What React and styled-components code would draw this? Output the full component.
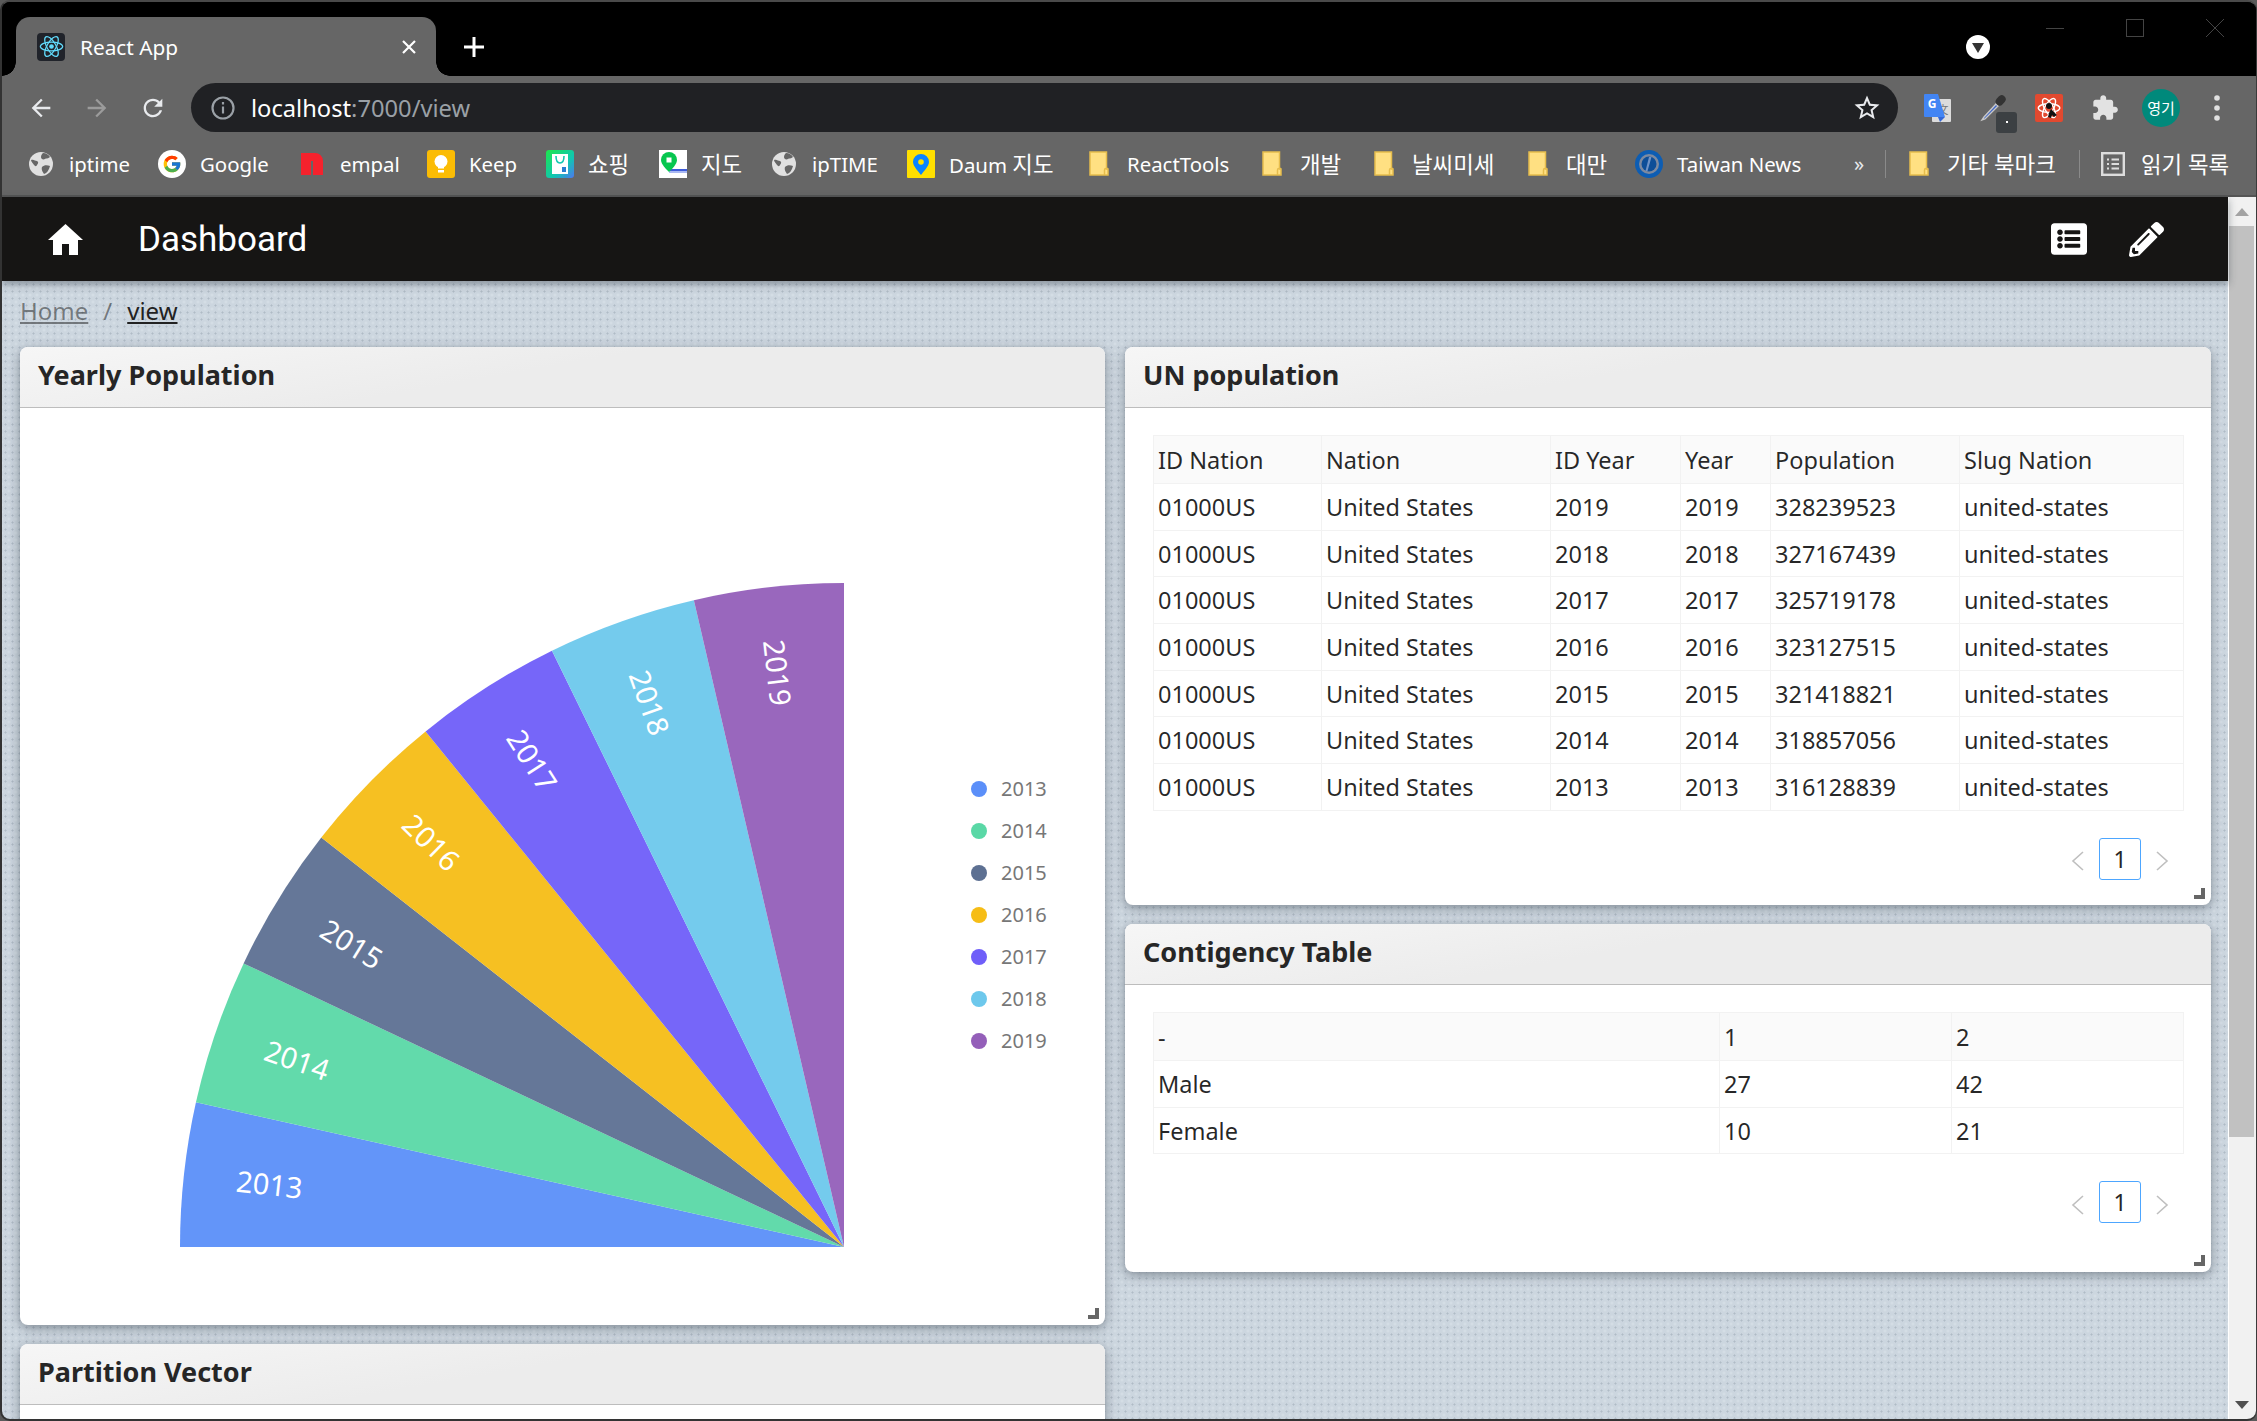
import React from 'react';
import styled, { createGlobalStyle } from 'styled-components';
import { FaListAlt, FaPencilAlt } from 'react-icons/fa';
import { FcGoogle } from 'react-icons/fc';

const FONT = '"Noto Sans", "Noto Sans CJK KR", sans-serif';

const GlobalStyle = createGlobalStyle`
  html, body {
    margin: 0;
    padding: 0;
    width: 100%;
    height: 100%;
    overflow: hidden;
    background: #5a5a5a;
    font-family: ${FONT};
  }
  * { box-sizing: border-box; }
`;

const Window = styled.div`
  display: flex;
  flex-direction: column;
  width: 2257px;
  height: 1421px;
  border-style: solid;
  border-color: #4a4a4a #3a3a3a #333 #333;
  border-width: 2px 1px 2px 2px;
  border-radius: 10px;
  overflow: hidden;
  background: #000;
`;

const TabStrip = styled.div`
  display: flex;
  align-items: center;
  flex: none;
  height: 74px;
  padding: 15px 32px 0 14px;
  background: #000;
`;

const Tab = styled.div`
  position: relative;
  display: flex;
  align-items: center;
  width: 420px;
  height: 59px;
  padding: 0 20px 0 21px;
  background: #666;
  border-radius: 14px 14px 0 0;
  color: #fff;
  font-size: 20.8px;

  &::before,
  &::after {
    content: '';
    position: absolute;
    bottom: 0;
    width: 14px;
    height: 14px;
  }
  &::before {
    left: -14px;
    background: radial-gradient(circle at 0 0, transparent 13.5px, #666 14px);
  }
  &::after {
    right: -14px;
    background: radial-gradient(circle at 100% 0, transparent 13.5px, #666 14px);
  }
`;

const Favicon = styled.span`
  display: flex;
  align-items: center;
  justify-content: center;
  width: 28px;
  height: 28px;
  margin-right: 15px;
  background: #20232a;
  border-radius: 4px;
`;

const TabClose = styled.svg`
  margin-left: auto;
`;

const NewTab = styled.svg`
  margin-left: 27px;
`;

const ProfileMenu = styled.span`
  position: relative;
  width: 24px;
  height: 24px;
  margin-left: auto;
  border-radius: 50%;
  background: #fff;

  &::after {
    content: '';
    position: absolute;
    left: 6px;
    top: 8px;
    border-left: 6px solid transparent;
    border-right: 6px solid transparent;
    border-top: 10px solid #333;
  }
`;

const WindowControls = styled.div`
  display: flex;
  align-self: flex-start;
  gap: 62px;
  margin: 2px 0 0 56px;
`;

const Toolbar = styled.div`
  display: flex;
  align-items: center;
  flex: none;
  height: 56px;
  padding: 7px 0 0 25px;
  background: #666;
`;

const NavButton = styled.span`
  display: flex;
  align-items: center;
  justify-content: center;
  width: 28px;
  height: 28px;
  margin-right: 28px;

  &:last-of-type {
    margin-right: 24px;
  }
`;

const AddressBar = styled.div`
  display: flex;
  align-items: center;
  width: 1707px;
  height: 49px;
  padding: 0 16px 0 20px;
  border-radius: 25px;
  background: #202124;
  font-size: 23.7px;
  color: #fff;
`;

const Host = styled.span`
  margin-left: 16px;
`;

const Path = styled.span`
  color: #9aa0a6;
`;

const Star = styled.svg`
  margin-left: auto;
`;

const Extensions = styled.div`
  display: flex;
  align-items: center;
  gap: 28px;
  margin-left: 25px;
`;

const Extension = styled.span`
  position: relative;
  display: flex;
  align-items: center;
  justify-content: center;
  width: 28px;
  height: 28px;
`;

const Avatar = styled.span`
  display: flex;
  align-items: center;
  justify-content: center;
  flex: none;
  width: 38px;
  height: 38px;
  border-radius: 50%;
  background: #00897b;
  color: #fff;
  font-size: 15px;
`;

const ExtBadge = styled.span`
  position: absolute;
  right: -10px;
  bottom: -11px;
  display: flex;
  align-items: center;
  justify-content: center;
  width: 21px;
  height: 21px;
  border-radius: 3px;
  background: #3c4043;

  &::after {
    content: '';
    width: 2px;
    height: 2px;
    background: #fff;
  }
`;

const BookmarkBar = styled.div`
  display: flex;
  align-items: center;
  flex: none;
  gap: 30px;
  height: 65px;
  padding-left: 25px;
  background: #666;
  border-bottom: 2px solid #555;
  color: #fff;
  font-size: 20.4px;
`;

const Bookmark = styled.span`
  display: flex;
  align-items: center;
  flex: none;
`;

const BookmarkIcon = styled.span`
  display: flex;
  align-items: center;
  justify-content: center;
  flex: none;
  width: 28px;
  height: 28px;
  margin-right: 14px;
`;

const BookmarkLabel = styled.span`
  width: ${p => p.$width}px;
  white-space: nowrap;
`;

const Hangul = styled.span`
  font-size: 22.4px;
`;

const Tail = styled.div`
  display: flex;
  align-items: center;
  gap: 19px;
  margin-left: 22px;
`;

const Overflow = styled.span`
  width: 12px;
  font-size: 20px;
  line-height: 1;
  color: #e8eaed;
`;

const BarSeparator = styled.span`
  width: 1px;
  height: 28px;
  background: #8a8a8a;
`;

const Body = styled.div`
  display: flex;
  flex: 1;
  min-height: 0;
`;

const Page = styled.div`
  display: flex;
  flex-direction: column;
  flex: 1;
  min-width: 0;
  background-color: #ccd6df;
  background-image:
    radial-gradient(rgba(130, 144, 158, 0.38) 0.8px, transparent 1.3px),
    radial-gradient(rgba(226, 233, 240, 0.45) 1px, transparent 1.6px);
  background-size: 7px 7px;
  background-position: 0 0, 3.5px 3.5px;
`;

const Navbar = styled.header`
  position: relative;
  z-index: 2;
  display: flex;
  align-items: center;
  flex: none;
  height: 84px;
  padding: 0 64px 0 46px;
  background: #161514;
  color: #fff;
  box-shadow: 0 3px 8px rgba(40, 50, 60, 0.45);
`;

const Brand = styled.span`
  margin-left: 55px;
  font-family: Roboto, sans-serif;
  font-size: 35px;
`;

const NavActions = styled.div`
  display: flex;
  align-items: center;
  gap: 42px;
  margin-left: auto;
`;

const Main = styled.main`
  flex: 1;
  min-height: 0;
  overflow: hidden;
  padding: 0 17px 0 18px;
`;

const Crumbs = styled.nav`
  display: flex;
  align-items: center;
  gap: 15px;
  height: 58px;
  margin-bottom: 8px;
  font-size: 24px;
  color: rgba(0, 0, 0, 0.45);
`;

const Crumb = styled.a`
  color: ${p => (p.$current ? '#222' : 'rgba(0, 0, 0, 0.45)')};
  text-decoration: underline;
`;

const Grid = styled.div`
  display: grid;
  grid-template-columns: 1085px 1086px;
  column-gap: 20px;
`;

const Column = styled.div`
  display: flex;
  flex-direction: column;
  gap: 19px;
`;

const Card = styled.section`
  position: relative;
  flex: none;
  height: ${p => p.$height}px;
  background: #fff;
  border-radius: 8px;
  box-shadow: 0 3px 12px rgba(50, 60, 72, 0.5);
`;

const CardHeader = styled.h2`
  display: flex;
  align-items: center;
  height: 61px;
  margin: 0;
  padding: 0 18px 5px 18px;
  background: linear-gradient(170deg, #f6f6f6, #ececec 45%);
  border-bottom: 1.5px solid #bdbdbd;
  border-radius: 8px 8px 0 0;
  font-size: 27px;
  font-weight: 700;
  color: #262626;
`;

const CardBody = styled.div`
  padding: 27px 28px 0;
`;

const ResizeHandle = styled.span`
  position: absolute;
  right: 6px;
  bottom: 6px;
  width: 11px;
  height: 11px;
  border-right: 4px solid #666;
  border-bottom: 4px solid #666;
`;

const ChartSvg = styled.svg`
  display: block;
`;

const DataTable = styled.table`
  width: 1030px;
  table-layout: fixed;
  border-collapse: collapse;
  font-size: 23.5px;
  color: rgba(0, 0, 0, 0.85);
`;

const Th = styled.th`
  height: 48px;
  padding: 0 4px;
  background: #fafafa;
  border: 1.5px solid #f2f2f2;
  font-weight: 400;
  text-align: left;
`;

const Td = styled.td`
  height: 46.7px;
  padding: 0 4px;
  border: 1.5px solid #f2f2f2;
  white-space: nowrap;
`;

const Pagination = styled.div`
  display: flex;
  justify-content: flex-end;
  margin-top: 27px;
`;

const PageArrow = styled.span`
  display: flex;
  align-items: center;
  justify-content: center;
  width: 42px;
  height: 42px;
  padding-top: 5px;
`;

const PageItem = styled.span`
  display: flex;
  align-items: center;
  justify-content: center;
  width: 42px;
  height: 42px;
  border: 1.5px solid #4da6ff;
  border-radius: 3px;
  font-size: 23px;
  color: #262626;
`;

const Scrollbar = styled.div`
  display: flex;
  flex-direction: column;
  align-items: flex-start;
  flex: none;
  width: 28px;
  background: #f1f1f1;
  border-left: 1px solid #fff;
`;

const ScrollButton = styled.span`
  display: flex;
  align-items: center;
  justify-content: center;
  flex: none;
  width: 25px;
  height: 29px;
  margin-top: ${p => (p.$bottom ? 'auto' : '0')};
`;

const ScrollTriangle = styled.span`
  border-left: 7px solid transparent;
  border-right: 7px solid transparent;
  ${p => (p.$down ? `border-top: 8px solid #505050;` : `border-bottom: 8px solid #a3a3a3;`)}
`;

const ScrollThumb = styled.span`
  flex: none;
  width: 25px;
  height: 911px;
  background: #c1c1c1;
`;

const Atom = ({ size = 24, color = '#61dafb' }) => (
  <svg width={size} height={size} viewBox="0 0 28 28" fill="none" stroke={color} strokeWidth="1.4">
    <circle cx="14" cy="14" r="2.6" fill={color} stroke="none" />
    <ellipse cx="14" cy="14" rx="12.5" ry="5" />
    <ellipse cx="14" cy="14" rx="12.5" ry="5" transform="rotate(60 14 14)" />
    <ellipse cx="14" cy="14" rx="12.5" ry="5" transform="rotate(120 14 14)" />
  </svg>
);

const HomeIcon = () => (
  <svg width="35" height="31" viewBox="0 0 35 31" fill="#fff">
    <path d="M17.5 0L35 16h-5v15h-9V20h-7v11H5V16H0z" />
  </svg>
);

const GlobeIcon = () => (
  <svg width="24" height="24" viewBox="0 0 24 24">
    <circle cx="12" cy="12" r="12" fill="#e0e0e0" />
    <path d="M2 8c3-1 4 1 6 1 2 1 1 3 0 4-1 2-2 1-3 0-1-2-3-3-3-5zM14 1c3 0 6 2 7 4-2 2-4 1-5 2-2 1-4 0-4-2 0-2 1-3 2-4zM13 15c2-2 5-2 8-1-1 4-3 7-6 8-1-2-3-4-2-7z" fill="#666" />
  </svg>
);

const GoogleBadge = () => (
  <svg width="28" height="28" viewBox="0 0 28 28">
    <circle cx="14" cy="14" r="14" fill="#fff" />
    <FcGoogle x="4" y="4" size={20} />
  </svg>
);

const EmpalIcon = () => (
  <svg width="22" height="22" viewBox="0 0 22 22">
    <path d="M0 22V0h14a8 8 0 0 1 8 8v14h-10V8H10v14z" fill="#f5222d" />
  </svg>
);

const KeepIcon = () => (
  <svg width="28" height="28" viewBox="0 0 28 28">
    <rect width="28" height="28" rx="3" fill="#fbbc04" />
    <circle cx="14" cy="11.5" r="6.5" fill="#fff" />
    <rect x="11" y="15" width="6" height="3.5" fill="#fff" />
    <rect x="11" y="20" width="6" height="2.5" fill="#fff" />
  </svg>
);

const ShoppingIcon = () => (
  <svg width="28" height="28" viewBox="0 0 28 28">
    <defs>
      <linearGradient id="shop" x1="0" y1="0" x2="1" y2="1">
        <stop offset="0" stopColor="#1de74a" />
        <stop offset="0.6" stopColor="#10c7b0" />
        <stop offset="1" stopColor="#4e78f0" />
      </linearGradient>
    </defs>
    <rect width="28" height="28" rx="3" fill="url(#shop)" />
    <rect x="6" y="4" width="16" height="20" fill="#fff" />
    <path d="M10 6c0 5 2 7 4 7s4-2 4-7" fill="none" stroke="#10c7b0" strokeWidth="1.6" />
    <rect x="16" y="17" width="4" height="5" fill="#2a7fd0" />
  </svg>
);

const MapIcon = () => (
  <svg width="28" height="28" viewBox="0 0 28 28">
    <rect width="28" height="28" fill="#fff" />
    <rect x="10" y="19" width="18" height="2" fill="#3d5bd9" />
    <rect x="10" y="21" width="18" height="2" fill="#a9b8f2" />
    <path d="M10 2a8 8 0 0 1 8 8c0 4-5 9-8 12-3-3-8-8-8-12a8 8 0 0 1 8-8z" fill="#07c64f" />
    <rect x="7.5" y="7.5" width="5" height="5" fill="#fff" />
  </svg>
);

const DaumIcon = () => (
  <svg width="28" height="28" viewBox="0 0 28 28">
    <rect width="28" height="28" rx="1" fill="#ffe000" />
    <path d="M14 4a8 8 0 0 1 8 8c0 4-5 9-8 13-3-4-8-9-8-13a8 8 0 0 1 8-8z" fill="#0a84ff" />
    <circle cx="14" cy="12" r="2.8" fill="#ffe000" />
  </svg>
);

const FolderIcon = () => (
  <svg width="20" height="25" viewBox="0 0 20 25">
    <path d="M1 1h16.5v17H19v6H1z" fill="#ffe082" stroke="#e6bd4c" strokeWidth="1.5" />
    <path d="M15.5 24v-5a1.5 1.5 0 0 1 1.5-1.5h2" fill="none" stroke="#e6bd4c" strokeWidth="1.5" />
  </svg>
);

const NewsIcon = () => (
  <svg width="28" height="28" viewBox="0 0 28 28">
    <circle cx="14" cy="14" r="14" fill="#0d5db3" />
    <circle cx="14" cy="14" r="10" fill="#7d8aa0" />
    <circle cx="14" cy="14" r="7.5" fill="#0d4e98" />
    <path d="M16.5 7l-4 14h-2l3.5-14z" fill="#6f93c7" />
  </svg>
);

const ReadingIcon = () => (
  <svg width="24" height="24" viewBox="0 0 24 24" fill="none" stroke="#ddd">
    <rect x="1.2" y="1.2" width="21.6" height="21.6" strokeWidth="2.4" />
    <path d="M6 7.5h2M6 12h2M6 16.5h2M10.5 7.5H18M10.5 12H18M10.5 16.5H18" strokeWidth="2.2" />
  </svg>
);

const TranslateIcon = () => (
  <svg width="28" height="28" viewBox="0 0 28 28">
    <rect x="9" y="5" width="19" height="23" rx="1" fill="#dcdcdc" />
    <text x="20" y="20" fontSize="11" fill="#777" textAnchor="middle" fontFamily={FONT}>文</text>
    <path d="M1 1a1 1 0 0 1 1-1h13l7 23H2a1 1 0 0 1-1-1z" fill="#4285f4" />
    <path d="M15 23h7l-5 5z" fill="#3367d6" />
    <text x="9" y="14" fontSize="12" fontWeight="700" fill="#fff" textAnchor="middle" fontFamily={FONT}>G</text>
  </svg>
);

const DropperIcon = () => (
  <svg width="28" height="28" viewBox="0 0 28 28">
    <path d="M17 10L5 23l-2 3 3-1L19 12z" fill="#3f66c8" stroke="#c8c8c8" strokeWidth="1.4" />
    <rect x="18" y="1" width="8" height="11" rx="4" transform="rotate(42 22 6)" fill="#333" />
  </svg>
);

const ReactBugIcon = () => (
  <svg width="28" height="28" viewBox="0 0 28 28">
    <rect width="28" height="28" rx="2" fill="#e2492f" />
    <g transform="translate(2 2) scale(0.86)" fill="none" stroke="#fff" strokeWidth="1.6">
      <ellipse cx="14" cy="14" rx="12.5" ry="5" />
      <ellipse cx="14" cy="14" rx="12.5" ry="5" transform="rotate(60 14 14)" />
      <ellipse cx="14" cy="14" rx="12.5" ry="5" transform="rotate(120 14 14)" />
    </g>
    <circle cx="14" cy="12" r="3" fill="#111" />
    <path d="M16 15l6 6-3 2-2-2-1 3-3-1 1-4z" fill="#111" />
  </svg>
);

const PuzzleIcon = () => (
  <svg width="28" height="28" viewBox="0 0 24 24" fill="#e2e2e2">
    <path d="M20.5 11H19V7c0-1.1-.9-2-2-2h-4V3.5C13 2.12 11.88 1 10.5 1S8 2.12 8 3.5V5H4c-1.1 0-1.99.9-1.99 2v3.8H3.5c1.49 0 2.7 1.21 2.7 2.7s-1.21 2.7-2.7 2.7H2V20c0 1.1.9 2 2 2h3.8v-1.5c0-1.49 1.21-2.7 2.7-2.7 1.49 0 2.7 1.21 2.7 2.7V22H17c1.1 0 2-.9 2-2v-4h1.5c1.38 0 2.5-1.12 2.5-2.5S21.88 11 20.5 11z" />
  </svg>
);

const KebabIcon = () => (
  <svg width="6" height="26" viewBox="0 0 6 26" fill="#e0e0e0">
    <circle cx="3" cy="3" r="2.8" />
    <circle cx="3" cy="13" r="2.8" />
    <circle cx="3" cy="23" r="2.8" />
  </svg>
);

const Chevron = ({ right }) => (
  <svg width="14" height="20" viewBox="0 0 14 20" fill="none" stroke="#bfbfbf" strokeWidth="1.6">
    <path d={right ? 'M2 1l10 9-10 9' : 'M12 1L2 10l10 9'} />
  </svg>
);

const BOOKMARKS = [
  { id: 'iptime', label: 'iptime', width: 59, icon: <GlobeIcon /> },
  { id: 'google', label: 'Google', width: 68, icon: <GoogleBadge /> },
  { id: 'empal', label: 'empal', width: 57, icon: <EmpalIcon /> },
  { id: 'keep', label: 'Keep', width: 47, icon: <KeepIcon /> },
  { id: 'shop', label: <Hangul>쇼핑</Hangul>, width: 41, icon: <ShoppingIcon /> },
  { id: 'map', label: <Hangul>지도</Hangul>, width: 39, icon: <MapIcon /> },
  { id: 'ipTIME', label: 'ipTIME', width: 65, icon: <GlobeIcon /> },
  { id: 'daum', label: <>Daum <Hangul>지도</Hangul></>, width: 106, icon: <DaumIcon /> },
  { id: 'tools', label: 'ReactTools', width: 101, icon: <FolderIcon /> },
  { id: 'dev', label: <Hangul>개발</Hangul>, width: 40, icon: <FolderIcon /> },
  { id: 'dust', label: <Hangul>날씨미세</Hangul>, width: 82, icon: <FolderIcon /> },
  { id: 'taiwan', label: <Hangul>대만</Hangul>, width: 39, icon: <FolderIcon /> },
  { id: 'news', label: 'Taiwan News', width: 125, icon: <NewsIcon /> }
];

const POPULATION_COLS = [168, 229, 130, 90, 189, 224];
const POPULATION_HEAD = ['ID Nation', 'Nation', 'ID Year', 'Year', 'Population', 'Slug Nation'];
const POPULATION_DATA = [
  [2019, 328239523],
  [2018, 327167439],
  [2017, 325719178],
  [2016, 323127515],
  [2015, 321418821],
  [2014, 318857056],
  [2013, 316128839]
];
const POPULATION = POPULATION_DATA.map(([year, total]) => ['01000US', 'United States', year, year, total, 'united-states']);

const CONTINGENCY_COLS = [566, 232, 232];
const CONTINGENCY_HEAD = ['-', '1', '2'];
const CONTINGENCY = [
  ['Male', 27, 42],
  ['Female', 10, 21]
];

const COLORS = ['#5B8FF9', '#5AD8A6', '#5D7092', '#F6BD16', '#6F5EF9', '#6DC8EC', '#945FB9'];

const CX = 824;
const CY = 839;
const RADIUS = 664;
const LABEL_RADIUS = 578;

// slices are proportional to the population of the year, oldest first
const SERIES = (() => {
  const rows = [...POPULATION_DATA].reverse();
  const sum = rows.reduce((acc, [, total]) => acc + total, 0);
  let start = 0;
  return rows.map(([year, total], i) => {
    const end = start + (total / sum) * 90;
    const slice = { year, color: COLORS[i], start, end };
    start = end;
    return slice;
  });
})();

const polar = (r, deg) => {
  const a = (deg * Math.PI) / 180;
  return [CX - r * Math.cos(a), CY - r * Math.sin(a)];
};

const Rose = () => (
  <ChartSvg width="1085" height="917" viewBox="0 0 1085 917">
    {SERIES.map(s => {
      const [x1, y1] = polar(RADIUS, s.start);
      const [x2, y2] = polar(RADIUS, s.end);
      const mid = (s.start + s.end) / 2;
      const [lx, ly] = polar(LABEL_RADIUS, mid);
      return (
        <g key={s.year}>
          <path
            d={`M${CX} ${CY}L${x1} ${y1}A${RADIUS} ${RADIUS} 0 0 1 ${x2} ${y2}Z`}
            fill={s.color}
            fillOpacity="0.95"
          />
          <text
            x={lx}
            y={ly}
            transform={`rotate(${mid} ${lx} ${ly})`}
            textAnchor="middle"
            dominantBaseline="central"
            fontSize="29"
            fill="#fff"
            fontFamily={FONT}
          >
            {s.year}
          </text>
        </g>
      );
    })}
    {SERIES.map((s, i) => (
      <g key={s.year}>
        <circle cx="959" cy={381 + i * 42} r="8" fill={s.color} />
        <text x="981" y={380 + i * 42} dominantBaseline="central" fontSize="20" fill="#777" fontFamily={FONT}>
          {s.year}
        </text>
      </g>
    ))}
  </ChartSvg>
);

const TablePanel = ({ cols, head, rows }) => (
  <CardBody>
    <DataTable>
      <colgroup>
        {cols.map((w, i) => <col key={i} width={w} />)}
      </colgroup>
      <thead>
        <tr>{head.map(h => <Th key={h}>{h}</Th>)}</tr>
      </thead>
      <tbody>
        {rows.map((row, r) => (
          <tr key={r}>{row.map((v, c) => <Td key={c}>{v}</Td>)}</tr>
        ))}
      </tbody>
    </DataTable>
    <Pagination>
      <PageArrow><Chevron /></PageArrow>
      <PageItem>1</PageItem>
      <PageArrow><Chevron right /></PageArrow>
    </Pagination>
  </CardBody>
);

const App = () => (
  <Window>
    <GlobalStyle />
    <TabStrip>
      <Tab>
        <Favicon><Atom size={25} /></Favicon>
        React App
        <TabClose width="14" height="14" viewBox="0 0 14 14" stroke="#fff" strokeWidth="2.2">
          <path d="M1 1l12 12M13 1L1 13" />
        </TabClose>
      </Tab>
      <NewTab width="22" height="22" viewBox="0 0 22 22" stroke="#fff" strokeWidth="3">
        <path d="M11 1v20M1 11h20" />
      </NewTab>
      <ProfileMenu />
      <WindowControls>
        <svg width="18" height="18" viewBox="0 0 18 18" stroke="#444"><path d="M0 9.5h18" /></svg>
        <svg width="18" height="18" viewBox="0 0 18 18" fill="none" stroke="#444"><rect x="0.5" y="0.5" width="17" height="17" /></svg>
        <svg width="18" height="18" viewBox="0 0 18 18" stroke="#444"><path d="M0 0l18 18M18 0L0 18" /></svg>
      </WindowControls>
    </TabStrip>

    <Toolbar>
      <NavButton>
        <svg width="34" height="34" viewBox="0 0 24 24" fill="#e8eaed">
          <path d="M20 11H7.83l5.59-5.59L12 4l-8 8 8 8 1.41-1.41L7.83 13H20v-2z" />
        </svg>
      </NavButton>
      <NavButton>
        <svg width="34" height="34" viewBox="0 0 24 24" fill="#9b9b9b">
          <path d="M4 11h12.17l-5.59-5.59L12 4l8 8-8 8-1.41-1.41L16.17 13H4v-2z" />
        </svg>
      </NavButton>
      <NavButton>
        <svg width="36" height="36" viewBox="0 0 24 24" fill="#e8eaed">
          <path d="M17.65 6.35C16.2 4.9 14.21 4 12 4c-4.42 0-7.99 3.58-7.99 8s3.57 8 7.99 8c3.73 0 6.84-2.55 7.73-6h-2.08c-.82 2.33-3.04 4-5.65 4-3.31 0-6-2.69-6-6s2.69-6 6-6c1.66 0 3.14.69 4.22 1.78L13 11h7V4l-2.35 2.35z" />
        </svg>
      </NavButton>
      <AddressBar>
        <svg width="24" height="24" viewBox="0 0 24 24" fill="none" stroke="#9aa0a6" strokeWidth="2.2">
          <circle cx="12" cy="12" r="10.5" />
          <path d="M12 10.5v7M12 6v2.6" />
        </svg>
        <Host>localhost<Path>:7000/view</Path></Host>
        <Star width="30" height="30" viewBox="0 0 24 24" fill="#e8eaed">
          <path d="M22 9.24l-7.19-.62L12 2 9.19 8.63 2 9.24l5.46 4.73L5.82 21 12 17.27 18.18 21l-1.63-7.03L22 9.24zM12 15.4l-3.76 2.27 1-4.28-3.32-2.88 4.38-.38L12 6.1l1.71 4.04 4.38.38-3.32 2.88 1 4.28L12 15.4z" />
        </Star>
      </AddressBar>
      <Extensions>
        <Extension><TranslateIcon /></Extension>
        <Extension><DropperIcon /><ExtBadge /></Extension>
        <Extension><ReactBugIcon /></Extension>
        <Extension><PuzzleIcon /></Extension>
        <Extension><Avatar>영기</Avatar></Extension>
        <Extension><KebabIcon /></Extension>
      </Extensions>
    </Toolbar>

    <BookmarkBar>
      {BOOKMARKS.map(b => (
        <Bookmark key={b.id}>
          <BookmarkIcon>{b.icon}</BookmarkIcon>
          <BookmarkLabel $width={b.width}>{b.label}</BookmarkLabel>
        </Bookmark>
      ))}
      <Tail>
        <Overflow>»</Overflow>
        <BarSeparator />
        <Bookmark>
          <BookmarkIcon><FolderIcon /></BookmarkIcon>
          <BookmarkLabel $width={113}><Hangul>기타 북마크</Hangul></BookmarkLabel>
        </Bookmark>
        <BarSeparator />
        <Bookmark>
          <BookmarkIcon><ReadingIcon /></BookmarkIcon>
          <BookmarkLabel $width={88}><Hangul>읽기 목록</Hangul></BookmarkLabel>
        </Bookmark>
      </Tail>
    </BookmarkBar>

    <Body>
      <Page>
        <Navbar>
          <HomeIcon />
          <Brand>Dashboard</Brand>
          <NavActions>
            <FaListAlt size={36} />
            <FaPencilAlt size={35} />
          </NavActions>
        </Navbar>
        <Main>
          <Crumbs>
            <Crumb>Home</Crumb>
            /
            <Crumb $current>view</Crumb>
          </Crumbs>
          <Grid>
            <Column>
              <Card $height={978}>
                <CardHeader>Yearly Population</CardHeader>
                <Rose />
                <ResizeHandle />
              </Card>
              <Card $height={400}>
                <CardHeader>Partition Vector</CardHeader>
              </Card>
            </Column>
            <Column>
              <Card $height={558}>
                <CardHeader>UN population</CardHeader>
                <TablePanel cols={POPULATION_COLS} head={POPULATION_HEAD} rows={POPULATION} />
                <ResizeHandle />
              </Card>
              <Card $height={348}>
                <CardHeader>Contigency Table</CardHeader>
                <TablePanel cols={CONTINGENCY_COLS} head={CONTINGENCY_HEAD} rows={CONTINGENCY} />
                <ResizeHandle />
              </Card>
            </Column>
          </Grid>
        </Main>
      </Page>
      <Scrollbar>
        <ScrollButton><ScrollTriangle /></ScrollButton>
        <ScrollThumb />
        <ScrollButton $bottom><ScrollTriangle $down /></ScrollButton>
      </Scrollbar>
    </Body>
  </Window>
);

export default App;
